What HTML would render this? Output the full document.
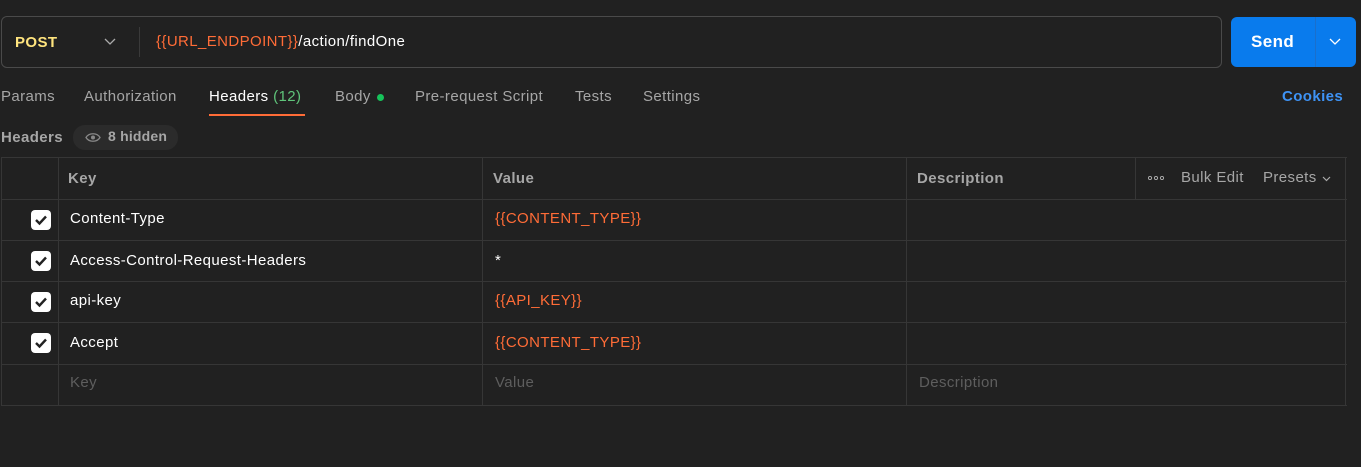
<!DOCTYPE html>
<html><head><meta charset="utf-8"><style>
*{margin:0;padding:0;box-sizing:border-box}
body{width:1361px;height:467px;background:#212121;font-family:"Liberation Sans",sans-serif;font-size:15px;letter-spacing:0.4px;color:#fff;position:relative;overflow:hidden}
.a{position:absolute;white-space:nowrap}
.o{color:#ff6c37}
.g{color:#a6a6a6}
.hl{position:absolute;height:1px;background:#363636}
.vl{position:absolute;width:1px;background:#363636}
.cb{position:absolute;left:31px;width:20px;height:20px;background:#fff;border-radius:4px}
.cb svg{position:absolute;left:3px;top:4px}
</style></head><body>
<div class="a" style="left:1px;top:16px;width:1221px;height:52px;border:1px solid #4a4a4a;border-radius:6px"></div>
<div class="a" style="left:15px;top:34px;font-weight:bold;color:#ffe47e;font-size:15px">POST</div>
<svg class="a" style="left:104px;top:38px" width="12" height="8"><path d="M1 1l5 5 5-5" stroke="#aaa" fill="none" stroke-width="1.3"/></svg>
<div class="vl" style="left:139px;top:27px;height:30px;background:#3a3a3a"></div>
<div class="a" style="left:156px;top:33px;font-size:15px"><span class="o">{{URL_ENDPOINT}}</span>/action/findOne</div>
<div class="a" style="left:1231px;top:17px;width:125px;height:50px;background:#097bed;border-radius:6px"></div>
<div class="vl" style="left:1315px;top:17px;height:50px;background:#1a6fcc"></div>
<div class="a" style="left:1251px;top:32px;font-weight:bold;font-size:17px">Send</div>
<svg class="a" style="left:1329px;top:38px" width="12" height="8"><path d="M1 1l5 5 5-5" stroke="#fff" fill="none" stroke-width="1.3"/></svg>
<div class="a g" style="left:1px;top:88px">Params</div>
<div class="a g" style="left:84px;top:88px">Authorization</div>
<div class="a" style="left:209px;top:88px">Headers <span style="color:#5fc47a">(12)</span></div>
<div class="a" style="left:209px;top:114px;width:96px;height:2px;background:#ff6c37"></div>
<div class="a g" style="left:335px;top:88px">Body</div>
<div class="a" style="left:377px;top:94px;width:7px;height:7px;border-radius:50%;background:#16c35a"></div>
<div class="a g" style="left:415px;top:88px">Pre-request Script</div>
<div class="a g" style="left:575px;top:88px">Tests</div>
<div class="a g" style="left:643px;top:88px">Settings</div>
<div class="a" style="left:1282px;top:88px;color:#3e93f5;font-weight:bold">Cookies</div>
<div class="a g" style="left:1px;top:129px;font-weight:bold">Headers</div>
<div class="a" style="left:73px;top:125px;width:105px;height:25px;background:#2b2b2b;border-radius:12px"></div>
<svg class="a" style="left:85px;top:132px" width="16" height="11"><path d="M1 5.5C4 0.5 12 0.5 15 5.5 12 10.5 4 10.5 1 5.5z" fill="none" stroke="#888" stroke-width="1.3"/><circle cx="8" cy="5.5" r="2" fill="#888"/></svg>
<div class="a g" style="left:108px;top:128px;font-weight:bold;font-size:14px;letter-spacing:0.2px">8 hidden</div>
<div class="hl" style="left:1px;top:157px;width:1346px"></div>
<div class="hl" style="left:1px;top:199px;width:1346px"></div>
<div class="hl" style="left:1px;top:240px;width:1346px"></div>
<div class="hl" style="left:1px;top:281px;width:1346px"></div>
<div class="hl" style="left:1px;top:322px;width:1346px"></div>
<div class="hl" style="left:1px;top:364px;width:1346px"></div>
<div class="hl" style="left:1px;top:405px;width:1346px"></div>
<div class="vl" style="left:1px;top:157px;height:249px"></div>
<div class="vl" style="left:58px;top:157px;height:249px"></div>
<div class="vl" style="left:482px;top:157px;height:249px"></div>
<div class="vl" style="left:906px;top:157px;height:249px"></div>
<div class="vl" style="left:1135px;top:157px;height:42px"></div>
<div class="vl" style="left:1345px;top:157px;height:249px"></div>
<div class="a g" style="left:68px;top:170px;font-weight:bold">Key</div>
<div class="a g" style="left:493px;top:170px;font-weight:bold">Value</div>
<div class="a g" style="left:917px;top:170px;font-weight:bold">Description</div>
<svg class="a" style="left:1148px;top:176px" width="16" height="4"><circle cx="2" cy="2" r="1.6" fill="none" stroke="#aaa"/><circle cx="8" cy="2" r="1.6" fill="none" stroke="#aaa"/><circle cx="14" cy="2" r="1.6" fill="none" stroke="#aaa"/></svg>
<div class="a g" style="left:1181px;top:169px">Bulk Edit</div>
<div class="a g" style="left:1263px;top:169px">Presets</div>
<svg class="a" style="left:1322px;top:176px" width="9" height="6"><path d="M1 1l3.5 3.5L8 1" stroke="#aaa" fill="none" stroke-width="1.2"/></svg>
<div class="cb" style="top:210px"><svg width="14" height="12"><path d="M2 6l3.5 3.5L12 2.5" stroke="#222" stroke-width="2.4" fill="none"/></svg></div>
<div class="cb" style="top:251px"><svg width="14" height="12"><path d="M2 6l3.5 3.5L12 2.5" stroke="#222" stroke-width="2.4" fill="none"/></svg></div>
<div class="cb" style="top:292px"><svg width="14" height="12"><path d="M2 6l3.5 3.5L12 2.5" stroke="#222" stroke-width="2.4" fill="none"/></svg></div>
<div class="cb" style="top:333px"><svg width="14" height="12"><path d="M2 6l3.5 3.5L12 2.5" stroke="#222" stroke-width="2.4" fill="none"/></svg></div>
<div class="a" style="left:70px;top:210px">Content-Type</div>
<div class="a o" style="left:495px;top:210px">{{CONTENT_TYPE}}</div>
<div class="a" style="left:70px;top:252px">Access-Control-Request-Headers</div>
<div class="a" style="left:495px;top:252px">*</div>
<div class="a" style="left:70px;top:292px">api-key</div>
<div class="a o" style="left:495px;top:292px">{{API_KEY}}</div>
<div class="a" style="left:70px;top:334px">Accept</div>
<div class="a o" style="left:495px;top:334px">{{CONTENT_TYPE}}</div>
<div class="a" style="left:70px;top:374px;color:#5e5e5e">Key</div>
<div class="a" style="left:495px;top:374px;color:#5e5e5e">Value</div>
<div class="a" style="left:919px;top:374px;color:#5e5e5e">Description</div>
</body></html>
